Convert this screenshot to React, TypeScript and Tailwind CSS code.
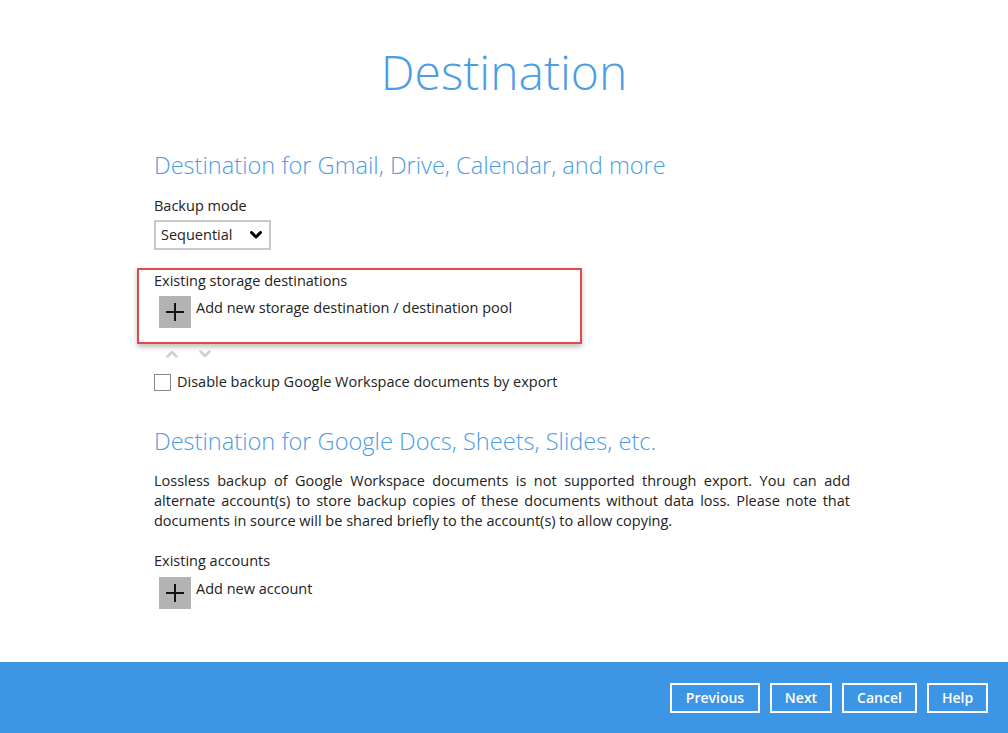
const font = { fontFamily: '"Open Sans", "Noto Sans", sans-serif' };

function AddButton({ label }: { label: string }) {
  return (
    <div className="flex items-start ml-[5px]">
      <div className="w-8 h-8 bg-[#b3b3b3] flex items-center justify-center">
        <svg width="20" height="20" viewBox="0 0 20 20">
          <path d="M10 1 V19 M1 10 H19" stroke="#111" strokeWidth="2" />
        </svg>
      </div>
      <span className="ml-[5px] mt-[2px] text-[14.5px] leading-5 text-[#222]">{label}</span>
    </div>
  );
}

function FooterButton({ label, width }: { label: string; width: string }) {
  return (
    <button className={`${width} h-[30px] border-2 border-white text-white text-[14px] font-semibold flex items-center justify-center`}>
      {label}
    </button>
  );
}

export default function App() {
  return (
    <div className="relative h-[733px] w-full bg-white flex flex-col" style={font}>
      <main className="flex-1">
        <h1 className="mt-[44px] text-center text-[48px] leading-[56px] font-light text-[#4c9de4]">
          Destination
        </h1>

        <div className="ml-[154px] w-[696px]">
          <h2 className="mt-[49px] text-[23.6px] leading-8 font-light text-[#4c9de4]">
            Destination for Gmail, Drive, Calendar, and more
          </h2>

          <p className="mt-[15px] text-[14.5px] leading-5 text-[#222]">Backup mode</p>
          <div className="mt-[4px] w-[117px] h-[30px] border-2 border-[#c8c8c8] flex items-center justify-between pl-[5px] pr-[7px]">
            <span className="text-[14.5px] text-[#222]">Sequential</span>
            <svg width="12" height="8" viewBox="0 0 12 8">
              <path d="M1.5 1.5 L6 6 L10.5 1.5" fill="none" stroke="#000" strokeWidth="3" strokeLinecap="round" strokeLinejoin="round" />
            </svg>
          </div>

          <p className="mt-[21px] text-[14.5px] leading-5 text-[#222]">Existing storage destinations</p>
          <div className="mt-[5px]">
            <AddButton label="Add new storage destination / destination pool" />
          </div>

          <div className="mt-[22px] ml-[12px] flex items-center gap-[21px]">
            <svg width="12" height="8" viewBox="0 0 12 8">
              <path d="M1.5 6.5 L6 2 L10.5 6.5" fill="none" stroke="#cfcfcf" strokeWidth="2.5" strokeLinecap="round" strokeLinejoin="round" />
            </svg>
            <svg width="12" height="8" viewBox="0 0 12 8">
              <path d="M1.5 1.5 L6 6 L10.5 1.5" fill="none" stroke="#cfcfcf" strokeWidth="2.5" strokeLinecap="round" strokeLinejoin="round" />
            </svg>
          </div>

          <label className="mt-[14px] flex items-center">
            <span className="w-[17px] h-[17px] border border-[#8a8a8a] bg-white" />
            <span className="ml-[6px] text-[14.5px] leading-5 text-[#222]">
              Disable backup Google Workspace documents by export
            </span>
          </label>

          <h2 className="mt-[33px] text-[23.6px] leading-8 font-light text-[#4c9de4]">
            Destination for Google Docs, Sheets, Slides, etc.
          </h2>

          <p className="mt-[14px] text-[14.5px] leading-5 text-[#222] text-justify">
            Lossless backup of Google Workspace documents is not supported through export. You can add alternate
            account(s) to store backup copies of these documents without data loss. Please note that documents in
            source will be shared briefly to the account(s) to allow copying.
          </p>

          <p className="mt-5 text-[14.5px] leading-5 text-[#222]">Existing accounts</p>
          <div className="mt-[6px]">
            <AddButton label="Add new account" />
          </div>
        </div>
      </main>

      <footer className="h-[71px] bg-[#3d95e6] flex items-center justify-end pr-5 gap-[10px]">
        <FooterButton label="Previous" width="w-[90px]" />
        <FooterButton label="Next" width="w-[62px]" />
        <FooterButton label="Cancel" width="w-[75px]" />
        <FooterButton label="Help" width="w-[61px]" />
      </footer>

      <div className="absolute left-[137px] top-[268px] w-[445px] h-[76px] border-2 border-[#e6474b] shadow-[0_3px_5px_rgba(0,0,0,0.25)] pointer-events-none" />
    </div>
  );
}
